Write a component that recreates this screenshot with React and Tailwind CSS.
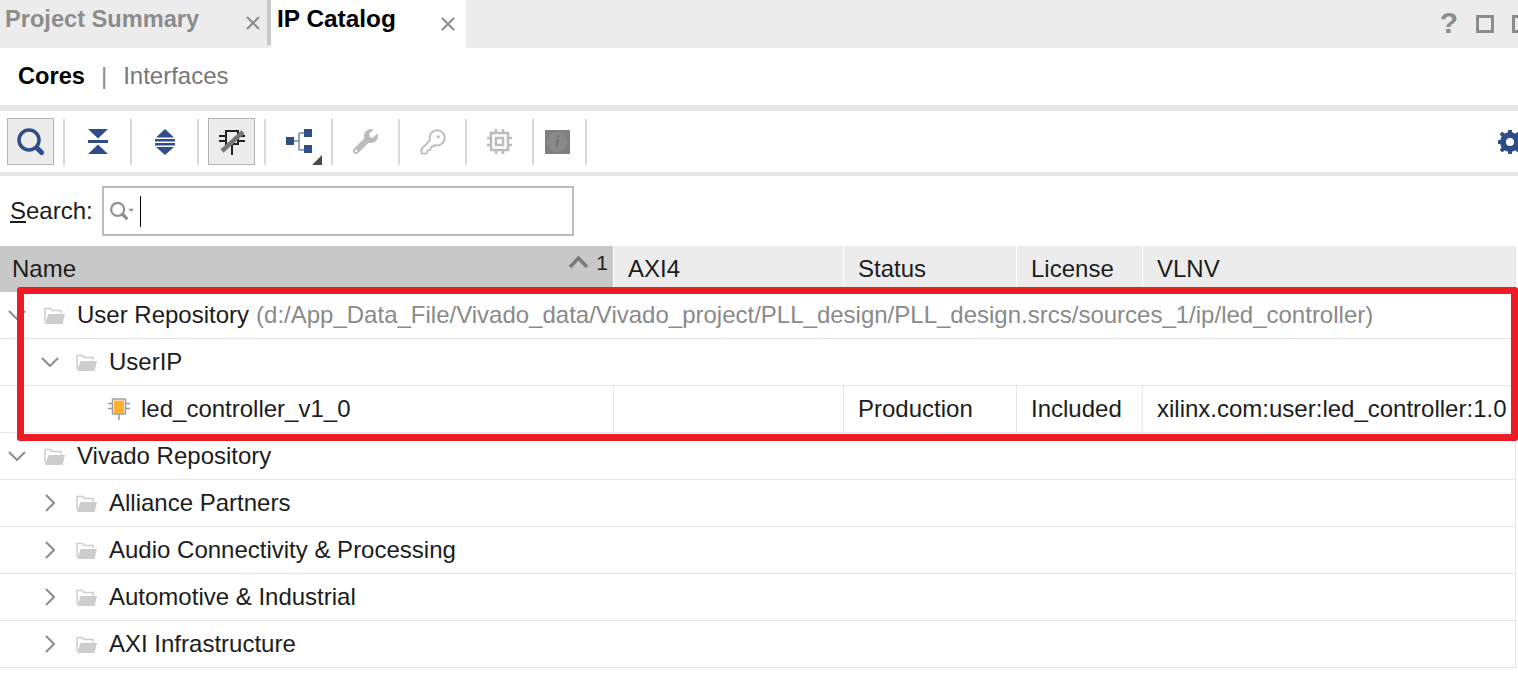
import { KeyRound } from "lucide-react";
import { FaWrench } from "react-icons/fa";

const BLUE = "#2f4d87";

function CloseIcon() {
  return (
    <svg width="16" height="16" viewBox="0 0 16 16" fill="none" stroke="#8c8c8c" strokeWidth="2">
      <path d="M2 2l12 12M14 2L2 14" />
    </svg>
  );
}

function SearchIcon() {
  return (
    <svg width="28" height="28" viewBox="0 0 28 28" fill="none">
      <circle cx="12" cy="12" r="10" stroke={BLUE} strokeWidth="3.500" />
      <path d="M20 20l4.500 4.500" stroke={BLUE} strokeWidth="5" strokeLinecap="round" />
    </svg>
  );
}

function CollapseIcon() {
  return (
    <svg width="22" height="26" viewBox="0 0 22 26" fill={BLUE}>
      <path d="M1 0h20l-10 9.500z" />
      <rect x="1" y="11" width="20" height="3" />
      <path d="M11 15.500L21 25H1z" />
    </svg>
  );
}

function ExpandIcon() {
  return (
    <svg width="22" height="26" viewBox="0 0 22 26" fill={BLUE}>
      <path d="M11 0l9 8.500H2z" />
      <rect x="1" y="10" width="20" height="2.500" />
      <rect x="1" y="14" width="20" height="2.500" />
      <path d="M2 18h18l-9 8z" />
    </svg>
  );
}

function CellIcon() {
  return (
    <svg width="26" height="26" viewBox="0 0 26 26" fill="none">
      <path d="M7 15V2h12v13z" stroke="#222" strokeWidth="2" />
      <path d="M0 7h7M19 7h7M0 12h7M19 12h7M13 15v11" stroke="#222" strokeWidth="2" />
      <path d="M3 22L24 3" stroke="#777" strokeWidth="4.500" />
    </svg>
  );
}

function HierarchyIcon() {
  return (
    <div className="relative flex h-[47px] w-[47px] items-center justify-center">
      <svg width="26" height="25" viewBox="0 0 26 25">
        <path d="M8 12h5M13 4v17M13 4h6M13 21h6" stroke="#6f86b3" strokeWidth="1.500" fill="none" />
        <rect x="0" y="8" width="8" height="8" fill={BLUE} />
        <rect x="18" y="0" width="8" height="8" fill={BLUE} />
        <rect x="18" y="16" width="8" height="8" fill={BLUE} />
      </svg>
      <svg className="absolute bottom-0 right-0" width="10" height="10" viewBox="0 0 10 10" fill="#4a4a4a">
        <path d="M10 0v10H0z" />
      </svg>
    </div>
  );
}

function ChipIcon() {
  return (
    <svg width="25" height="25" viewBox="0 0 25 25" fill="none" stroke="#bcbcbc">
      <rect x="4" y="4" width="17" height="17" strokeWidth="2.500" />
      <rect x="9" y="9" width="7" height="7" strokeWidth="2.500" />
      <path d="M9 0v4M16 0v4M9 21v4M16 21v4M0 9h4M0 16h4M21 9h4M21 16h4" strokeWidth="2.500" />
    </svg>
  );
}

function InfoIcon() {
  return (
    <div className="flex h-[24px] w-[25px] items-center justify-center bg-[#7f7f7f]">
      <div className="flex h-[20px] w-[20px] items-center justify-center rounded-full bg-[#8a8a8a] font-['Liberation_Serif',serif] text-[17px] font-bold italic leading-none text-[#727272]">
        i
      </div>
    </div>
  );
}

function GearIcon() {
  return (
    <svg className="mr-[-4px] shrink-0" width="24" height="24" viewBox="0 0 24 24">
      <circle cx="12" cy="12" r="7" fill="none" stroke={BLUE} strokeWidth="6" />
      <path
        d="M12 1v22M1 12h22M4.200 4.200l15.600 15.600M19.800 4.200L4.200 19.800"
        stroke={BLUE}
        strokeWidth="4"
        strokeLinecap="round"
        strokeDasharray="4 14 4"
      />
    </svg>
  );
}

function FolderIcon() {
  return (
    <svg className="shrink-0" width="21" height="18" viewBox="0 0 21 18">
      <path d="M1 16V2.500h5.500l1.500 2h9v3" fill="none" stroke="#cdcdcd" strokeWidth="1.500" />
      <path d="M4.500 8H21l-2.500 10H1z" fill="#cdcdcd" />
    </svg>
  );
}

function IpIcon() {
  return (
    <svg className="shrink-0" width="22" height="22" viewBox="0 0 22 22">
      <path d="M4.500 1h13M4.500 1v15M17.500 1v15M4.500 16h13" stroke="#9a9a9a" strokeWidth="1.500" fill="none" />
      <rect x="6" y="2.500" width="10" height="12.500" fill="#fbb034" />
      <path d="M0 5.500h4M0 10.500h4M18 5.500h4M18 10.500h4M11 16v6" stroke="#9a9a9a" strokeWidth="1.500" />
    </svg>
  );
}

function ChevronDown() {
  return (
    <svg className="shrink-0" width="18" height="10" viewBox="0 0 18 10" fill="none" stroke="#8c8c8c" strokeWidth="2">
      <path d="M1 1l8 8 8-8" />
    </svg>
  );
}

function ChevronRight() {
  return (
    <svg className="shrink-0" width="10" height="18" viewBox="0 0 10 18" fill="none" stroke="#8c8c8c" strokeWidth="2">
      <path d="M1 1l8 8-8 8" />
    </svg>
  );
}

function Separator() {
  return <div className="h-[46px] w-[2px] shrink-0 bg-[#d8d8d8]" />;
}

function ToolSlot({ active, width = "w-[65px]", children }) {
  return (
    <div className={`flex h-full shrink-0 items-center justify-center ${width}`}>
      {active ? (
        <div className="flex h-[47px] w-[47px] items-center justify-center border border-[#b4b4b4] bg-[#ececec]">
          {children}
        </div>
      ) : (
        children
      )}
    </div>
  );
}

function GroupRow({ name, tail }) {
  return (
    <div className="flex h-[47px] items-center whitespace-nowrap border-b border-[#e6e6e6] pl-[8px]">
      <ChevronDown />
      <div className="ml-[18px] mr-[12px]">
        <FolderIcon />
      </div>
      <span>{name}</span>
      {tail && <span className="ml-[7px] text-[#8a8a8a]">{tail}</span>}
    </div>
  );
}

function SubRow({ name, open }) {
  return (
    <div className="flex h-[47px] items-center whitespace-nowrap border-b border-[#e6e6e6]">
      <div className="flex w-[76px] shrink-0 items-center justify-center pl-[23px]">
        {open ? <ChevronDown /> : <ChevronRight />}
      </div>
      <FolderIcon />
      <span className="ml-[12px]">{name}</span>
    </div>
  );
}

const columns = "grid grid-cols-[613px_230px_173px_126px_373px]";
const subgroups = ["Alliance Partners", "Audio Connectivity & Processing", "Automotive & Industrial", "AXI Infrastructure"];

export default function App() {
  return (
    <div className="relative h-[679px] w-[1518px] overflow-hidden bg-white font-['Liberation_Sans',Arial,sans-serif] text-[24px] text-[#1c1c1c]">
      {/* tab bar */}
      <div className="flex h-12 items-start bg-[#ececec]">
        <div className="flex h-[45px] w-[267px] items-center justify-between pl-[5px] pr-[6px] text-[#8c8c8c]">
          <span className="mb-[6px] text-[23.6px] font-bold">Project Summary</span>
          <CloseIcon />
        </div>
        <div className="h-[45px] w-1 bg-[#c8c8c8]" />
        <div className="flex h-12 w-[195px] items-center justify-between bg-white pl-[6px] pr-[10px]">
          <span className="mb-[10px] text-[24.4px] font-bold text-black">IP Catalog</span>
          <CloseIcon />
        </div>
        <div className="ml-auto flex h-12 items-center">
          <span className="mb-[4px] mr-[18px] text-[30px] font-bold text-[#8c8c8c]">?</span>
          <div className="mr-[18px] h-[18px] w-[18px] border-[3px] border-[#8c8c8c]" />
          <div className="mr-[-12px] h-[18px] w-[18px] border-[3px] border-[#8c8c8c]" />
        </div>
      </div>

      {/* cores / interfaces */}
      <div className="flex h-[57px] items-center pb-[1px] pl-[18px]">
        <span className="mt-[2px] text-[23.6px] font-bold text-black">Cores</span>
        <span className="ml-[16px] text-[#8c8c8c]">|</span>
        <span className="ml-[16px] text-[#777]">Interfaces</span>
      </div>
      <div className="h-[6px] bg-[#e6e6e6]" />

      {/* toolbar */}
      <div className="flex h-[61px] items-center overflow-hidden">
        <ToolSlot active width="w-[61px]">
          <SearchIcon />
        </ToolSlot>
        <div className="w-[2px]" />
        <Separator />
        <ToolSlot>
          <CollapseIcon />
        </ToolSlot>
        <Separator />
        <ToolSlot>
          <ExpandIcon />
        </ToolSlot>
        <Separator />
        <ToolSlot active>
          <CellIcon />
        </ToolSlot>
        <Separator />
        <ToolSlot>
          <HierarchyIcon />
        </ToolSlot>
        <Separator />
        <ToolSlot>
          <FaWrench size={25} color="#bcbcbc" />
        </ToolSlot>
        <Separator />
        <ToolSlot>
          <KeyRound size={28} color="#bcbcbc" strokeWidth={1.6} />
        </ToolSlot>
        <Separator />
        <ToolSlot>
          <ChipIcon />
        </ToolSlot>
        <Separator />
        <ToolSlot width="w-[51px]">
          <div className="mr-[5px]">
            <InfoIcon />
          </div>
        </ToolSlot>
        <Separator />
        <div className="ml-auto">
          <GearIcon />
        </div>
      </div>
      <div className="h-1 bg-[#e6e6e6]" />

      {/* search */}
      <div className="flex h-[70px] items-center pl-[10px]">
        <span>
          <span className="underline">S</span>earch:
        </span>
        <div className="ml-[9px] flex h-[50px] w-[472px] items-center border-2 border-[#bdbdbd] pl-[5px]">
          <svg width="26" height="22" viewBox="0 0 24 20" fill="none">
            <circle cx="8" cy="8.500" r="6" stroke="#8f8f8f" strokeWidth="2" />
            <path d="M12.500 13l3.500 3.500" stroke="#8f8f8f" strokeWidth="3" strokeLinecap="round" />
            <path d="M18 8h5l-2.500 3z" fill="#8f8f8f" />
          </svg>
          <div className="ml-[5px] h-[31px] w-px bg-black" />
        </div>
      </div>

      {/* table */}
      <div className="relative w-[1516px] border-r border-[#e6e6e6]">
        <div className={`${columns} h-[46px]`}>
          <div className="flex items-center justify-between bg-[#c8c8c8] pl-[12px] pr-[5px]">
            <span>Name</span>
            <div className="mb-[14px] flex items-center gap-[7px] text-[21px] leading-none">
              <svg width="21" height="14" viewBox="0 0 21 14" fill="none" stroke="#7a7a7a" strokeWidth="3.500">
                <path d="M2 12l8.500-9 8.500 9" />
              </svg>
              <span>1</span>
            </div>
          </div>
          {["AXI4", "Status", "License", "VLNV"].map((label) => (
            <div key={label} className="flex items-center border-l border-white bg-[#ececec] pl-[14px]">
              <span>{label}</span>
            </div>
          ))}
        </div>

        <GroupRow
          name="User Repository"
          tail="(d:/App_Data_File/Vivado_data/Vivado_project/PLL_design/PLL_design.srcs/sources_1/ip/led_controller)"
        />
        <SubRow name="UserIP" open />
        <div className={`${columns} h-[47px] items-stretch whitespace-nowrap border-b border-[#e6e6e6]`}>
          <div className="flex items-center pl-[108px]">
            <IpIcon />
            <span className="ml-[11px]">led_controller_v1_0</span>
          </div>
          <div className="border-l border-[#e6e6e6]" />
          <div className="flex items-center border-l border-[#e6e6e6] pl-[14px]">Production</div>
          <div className="flex items-center border-l border-[#e6e6e6] pl-[14px]">Included</div>
          <div className="flex items-center border-l border-[#e6e6e6] pl-[14px]">xilinx.com:user:led_controller:1.0</div>
        </div>

        <GroupRow name="Vivado Repository" />
        {subgroups.map((name) => (
          <SubRow key={name} name={name} />
        ))}

        {/* highlight drawn over the table */}
        <div className="absolute left-[17px] top-[41px] h-[154px] w-[1501px] rounded-[3px] border-[7px] border-[#ed1c24]" />
      </div>
    </div>
  );
}
